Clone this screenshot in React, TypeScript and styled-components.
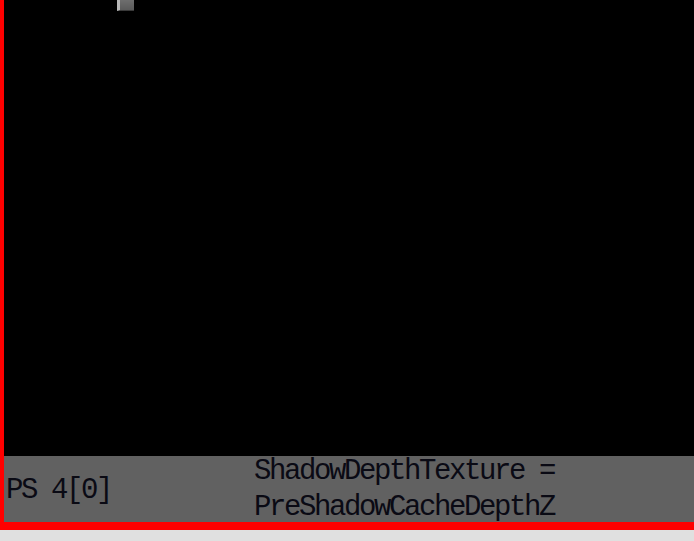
import React from "react";
import styled, { createGlobalStyle } from "styled-components";

const GlobalStyle = createGlobalStyle`
  html, body {
    margin: 0;
    padding: 0;
    background: #e0e0e0;
    overflow: hidden;
  }
`;

const Frame = styled.div`
  width: 690px;
  height: 522px;
  border-left: 4px solid #ff0000;
  border-bottom: 8px solid #ff0000;
  background: #000000;
  display: flex;
  flex-direction: column;
`;

const Canvas = styled.div`
  flex: 1;
  position: relative;
  overflow: hidden;
`;

const Marker = styled.div<{ $x: number; $y: number }>`
  position: absolute;
  left: ${(p) => p.$x}px;
  top: ${(p) => p.$y}px;
  width: 17px;
  height: 11px;
  box-sizing: border-box;
  border-left: 3px solid #b8b8b8;
  border-bottom: 1px solid #3a3a3a;
  background: linear-gradient(180deg, #6e6e6e 0%, #5a5a5a 100%);
`;

const InfoBar = styled.div`
  height: 66px;
  background: #616161;
  display: grid;
  grid-template-columns: 250px 1fr;
  overflow: hidden;
  font-family: "Liberation Mono", "DejaVu Sans Mono", monospace;
  font-size: 29px;
  letter-spacing: -2.4px;
  line-height: 36px;
  color: #0a0a14;
`;

const Label = styled.div`
  align-self: center;
  padding-left: 2px;
  white-space: pre;
`;

const Value = styled.div`
  margin-top: -2px;
  white-space: pre;
`;

export default function App() {
  return (
    <>
      <GlobalStyle />
      <Frame>
        <Canvas>
          <Marker $x={113} $y={0} />
        </Canvas>
        <InfoBar>
          <Label>PS 4[0]</Label>
          <Value>
            {"ShadowDepthTexture ="}
            <br />
            {"PreShadowCacheDepthZ"}
          </Value>
        </InfoBar>
      </Frame>
    </>
  );
}
